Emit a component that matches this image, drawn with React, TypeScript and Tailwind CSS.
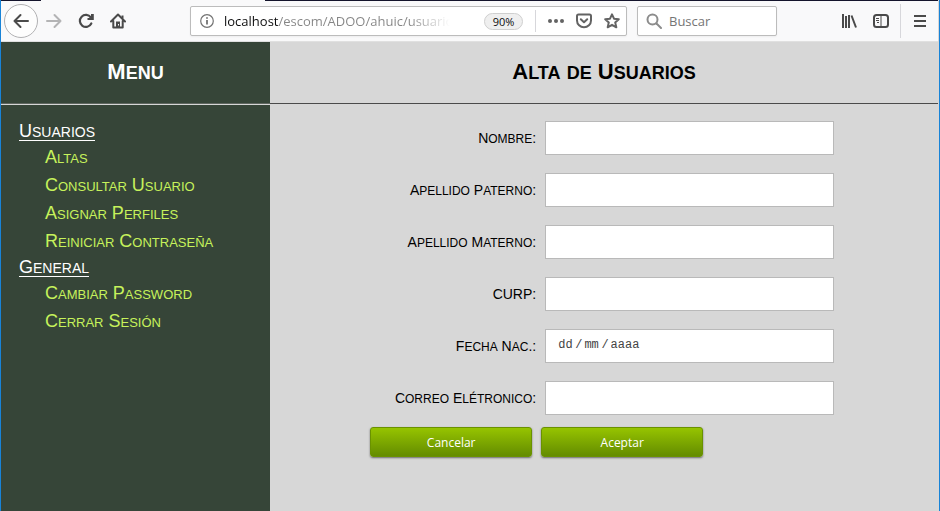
import React from "react";

const CAPS = "[font-variant-caps:small-caps]";

type Size = "title" | "section" | "item" | "label";

const sizes: Record<Size, { cap: string; rest: string }> = {
  title: { cap: "text-[22px]", rest: "text-[25px]" },
  section: { cap: "text-[18px]", rest: "text-[20px]" },
  item: { cap: "text-[18px]", rest: "text-[19px]" },
  label: { cap: "text-[14px]", rest: "text-[17px]" },
};

/* Small capitals at about four fifths of the capital height. */
function SmallCaps({ text, size }: { text: string; size: Size }) {
  const parts = text.match(/[a-zñáéíóú]+|[^a-zñáéíóú]+/g) ?? [];
  return (
    <span className={sizes[size].cap}>
      {parts.map((part, i) =>
        /^[a-zñáéíóú]/.test(part) ? (
          <span key={i} className={`${CAPS} ${sizes[size].rest}`}>
            {part}
          </span>
        ) : (
          part
        ),
      )}
    </span>
  );
}

function Icon({ children, size = 16 }: { children: React.ReactNode; size?: number }) {
  return (
    <svg
      width={size}
      height={size}
      viewBox="0 0 16 16"
      fill="none"
      stroke="currentColor"
      strokeWidth="2"
      strokeLinecap="round"
      strokeLinejoin="round"
      aria-hidden="true"
      className="shrink-0"
    >
      {children}
    </svg>
  );
}

function Toolbar() {
  return (
    <header className="bg-[#f9f9fa] border-b border-[#e0e0e0] font-['Open_Sans','Noto_Sans',sans-serif] text-[13px] text-[#4a4a4a]">
      <div className="flex h-px">
        <div className="w-10 bg-[#14142c]" />
        <div className="w-56" />
        <div className="flex-1 bg-[#14142c]" />
      </div>
      <div className="flex h-10 items-center">
        <div className="flex w-[189px] shrink-0 items-center pl-[3px]">
          <button aria-label="Atrás" className="flex size-[34px] items-center justify-center rounded-full border border-[#b1b1b3] bg-[#fdfdfd]">
            <Icon>
              <path d="M15 8H1.5M7.5 2L1.5 8l6 6" />
            </Icon>
          </button>
          <button aria-label="Adelante" className="ml-2 flex w-4 text-[#b4b4b5]">
            <Icon>
              <path d="M1 8h13.500M8.500 2l6 6-6 6" />
            </Icon>
          </button>
          <button aria-label="Recargar" className="ml-4 flex">
            <Icon>
              <path d="M12.800 4.500A6 6 0 1 0 13.300 10.500" strokeWidth="2.200" />
              <path d="M15.800 1v6H9.500V5H13V1z" fill="currentColor" stroke="none" />
            </Icon>
          </button>
          <button aria-label="Inicio" className="ml-4 flex">
            <Icon>
              <path d="M1 8.500L8 1.500l7 7M3.300 8v6.500h9.400V8" />
              <path d="M6 14V8.500h4V14z" fill="currentColor" stroke="none" />
              <path d="M8.500 11v1.500" stroke="#f9f9fa" strokeWidth="1" strokeLinecap="butt" />
              <path d="M12.500 2.500v3" strokeLinecap="butt" />
            </Icon>
          </button>
        </div>

        <div className="flex h-[30px] min-w-0 flex-1 items-center rounded-[2px] border border-[#bcbcbc] bg-white pl-[9px] pr-[6px] shadow-xs">
          <svg width="14" height="14" viewBox="0 0 14 14" fill="none" stroke="#737373" aria-hidden="true" className="shrink-0">
            <circle cx="7" cy="7" r="6.300" strokeWidth="1.200" />
            <path d="M7 6v4.500M7 3.200v1.600" strokeWidth="1.800" />
          </svg>
          <input
            aria-label="Dirección"
            readOnly
            value="localhost/escom/ADOO/ahuic/usuarios"
            className="ml-[10px] w-[226px] min-w-0 grow-0 bg-[linear-gradient(to_right,#0c0c0d_55px,#858585_55px,#858585_185px,transparent)] bg-clip-text pt-[2px] text-transparent outline-none"
          />
          <button className="ml-auto h-[17px] w-[39px] shrink-0 rounded-full border border-[#cfcfcf] bg-[#efefef] text-[11px] leading-[15px] text-[#0c0c0d]">
            90%
          </button>
          <div className="ml-3 h-[22px] w-px shrink-0 bg-[#d7d7db]" />
          <button aria-label="Acciones de página" className="ml-3 flex text-[#636363]">
            <Icon>
              <g fill="currentColor" stroke="none">
                <circle cx="2" cy="8" r="2" />
                <circle cx="8" cy="8" r="2" />
                <circle cx="14" cy="8" r="2" />
              </g>
            </Icon>
          </button>
          <button aria-label="Guardar en Pocket" className="ml-3 flex text-[#636363]">
            <Icon>
              <path d="M1 3q0-1.500 1.500-1.500h11Q15 1.500 15 3v4.500a7 6.800 0 0 1-14 0z" />
              <path d="M4.800 6.300L8 9.300l3.200-3" />
            </Icon>
          </button>
          <button aria-label="Añadir a marcadores" className="ml-3 flex text-[#636363]">
            <Icon>
              <path d="M8 1.300l2 4.400 4.800.5-3.600 3.200 1.100 4.900L8 11.800l-4.300 2.500 1.100-4.900L1.200 6.200 6 5.700z" />
            </Icon>
          </button>
        </div>

        <label className="ml-[10px] flex h-[30px] w-[140px] shrink-0 items-center rounded-[2px] border border-[#bcbcbc] bg-white pl-2 text-[#8c8c8c] shadow-xs">
          <Icon>
            <circle cx="6.500" cy="6.500" r="5" />
            <path d="M10.500 10.500L15 15" />
          </Icon>
          <input aria-label="Buscar" placeholder="Buscar" className="ml-[7px] w-full min-w-0 pt-[2px] outline-none placeholder:text-[#757575]" />
        </label>

        <button aria-label="Biblioteca" className="ml-16 flex">
          <Icon>
            <path d="M2 1v14M5 3v12M8 2v13M10.500 2.500l4.500 12" strokeLinecap="butt" />
          </Icon>
        </button>
        <button aria-label="Barra lateral" className="ml-4 flex">
          <Icon>
            <rect x="1" y="2" width="14" height="12" rx="2.500" />
            <path d="M8 2v12M3 5.500h3M3 7.500h3M4 9.500h2" strokeWidth="1" strokeLinecap="butt" />
          </Icon>
        </button>
        <div className="ml-[11px] h-[34px] w-px bg-[#d7d7db]" />
        <button aria-label="Menú" className="ml-[11px] mr-[10px] flex">
          <Icon>
            <path d="M2 3h12M2 8h12M2 13h12" strokeLinecap="butt" />
          </Icon>
        </button>
      </div>
    </header>
  );
}

const sections = [
  { name: "Usuarios", items: ["Altas", "Consultar Usuario", "Asignar Perfiles", "Reiniciar Contraseña"] },
  { name: "General", items: ["Cambiar Password", "Cerrar Sesión"] },
];

function Sidebar() {
  return (
    <aside className="w-[269px] shrink-0 bg-[#364538]">
      <h2 className="flex h-[61px] items-center justify-center pb-[3px] font-bold leading-6 text-white">
        <SmallCaps text="Menu" size="title" />
      </h2>
      <hr className="h-[2px] border-t border-b border-t-[#5f665f] border-b-[#d6d6d6]" />
      <nav className="pl-[18px] pt-[14px]">
        {sections.map((section) => (
          <section key={section.name}>
            <h3 className="flex h-6 items-center leading-5 text-white">
              <span className="border-b border-white leading-[17px]">
                <SmallCaps text={section.name} size="section" />
              </span>
            </h3>
            <ul className="flex flex-col gap-2 py-1 pl-[26px]">
              {section.items.map((item) => (
                <li key={item} className="h-5 leading-5">
                  <a href="#" className="text-[#c6f25b]">
                    <SmallCaps text={item} size="item" />
                  </a>
                </li>
              ))}
            </ul>
          </section>
        ))}
      </nav>
    </aside>
  );
}

const BOX = "h-[34px] w-[calc(74%-2px)] border border-[#b9b9b9] bg-white px-3";

function Row({ id, label, children }: { id: string; label: string; children: React.ReactNode }) {
  return (
    <div className="grid grid-cols-[2fr_3fr] items-center">
      <label htmlFor={id} className="whitespace-nowrap pr-px text-right leading-5">
        <SmallCaps text={label} size="label" />
      </label>
      <div className="pl-2">{children}</div>
    </div>
  );
}

function TextRow({ id, label, type = "text" }: { id: string; label: string; type?: string }) {
  return (
    <Row id={id} label={label}>
      <input id={id} type={type} className={`${BOX} block text-sm`} />
    </Row>
  );
}

const DATE_PART = "min-w-0 p-0 outline-none placeholder:text-[#444]";

function Main() {
  return (
    <main className="flex-1 bg-[#d7d7d7] text-black">
      <h1 className="flex h-[61px] items-center justify-center pb-[3px] font-bold leading-6">
        <SmallCaps text="Alta de Usuarios" size="title" />
      </h1>
      <hr className="border-t border-[#4a4a4a]" />
      <form className="pt-[17px]" onSubmit={(e) => e.preventDefault()}>
        <div className="flex flex-col gap-[18px]">
          <TextRow id="nombre" label="Nombre:" />
          <TextRow id="paterno" label="Apellido Paterno:" />
          <TextRow id="materno" label="Apellido Materno:" />
          <TextRow id="curp" label="CURP:" />
          <Row id="dia" label="Fecha Nac.:">
            <div className={`${BOX} flex items-center gap-[2px] pb-[2px] font-['Liberation_Mono',monospace] text-[12px] text-[#444]`}>
              <input id="dia" placeholder="dd" className={`${DATE_PART} w-[15px]`} />
              <span>/</span>
              <input aria-label="Mes" placeholder="mm" className={`${DATE_PART} w-[15px]`} />
              <span>/</span>
              <input aria-label="Año" placeholder="aaaa" className={`${DATE_PART} w-[30px]`} />
            </div>
          </Row>
          <TextRow id="correo" label="Correo Elétronico:" type="email" />
        </div>
        <div className="mt-3 flex gap-[9px] pl-[15%]">
          {["Cancelar", "Aceptar"].map((name) => (
            <button
              key={name}
              className="h-[30px] w-[162px] rounded-[3px] border border-[#6a9200] bg-linear-to-b from-[#96c400] to-[#648c00] pt-[2px] font-['Open_Sans','Noto_Sans',sans-serif] text-[12px] text-white shadow-[0_1px_2px_rgba(0,0,0,0.5)]"
            >
              {name}
            </button>
          ))}
        </div>
      </form>
    </main>
  );
}

export default function App() {
  return (
    <div className="flex min-h-screen flex-col border-x border-[#1883d7] bg-[#d7d7d7] pr-px font-['Liberation_Sans',Arial,sans-serif]">
      <Toolbar />
      <div className="flex flex-1">
        <Sidebar />
        <Main />
      </div>
    </div>
  );
}
